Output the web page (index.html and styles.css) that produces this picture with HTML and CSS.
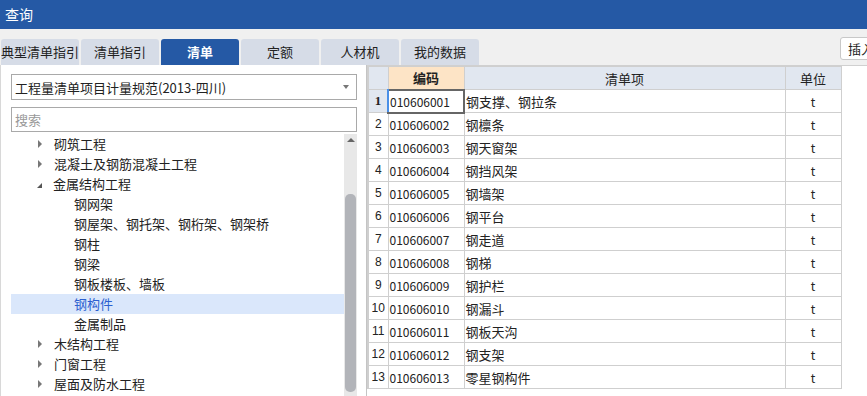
FILE: index.html
```html
<html lang="zh-CN">
  <head>
    <meta charset="UTF-8" />
    <title>查询</title>
    <link rel="stylesheet" href="styles.css">
  </head>
  <body>
    <!-- Title bar -->
    <header class="titlebar">查询</header>

    <!-- Tabs -->
    <nav class="tabs">
      <a class="tab">典型清单指引</a>
      <a class="tab">清单指引</a>
      <a class="tab active">清单</a>
      <a class="tab">定额</a>
      <a class="tab">人材机</a>
      <a class="tab">我的数据</a>
      <button class="insert-btn">插入</button>
    </nav>

    <main class="content">
      <!-- Left: spec select + tree -->
      <section class="left">
        <div class="select">
          <span>工程量清单项目计量规范(2013-四川)</span>
          <span class="caret"></span>
        </div>
        <div class="search">搜索</div>
        <div class="tree-wrap">
          <ul class="tree">
            <li class="node"><span class="arrow"></span>砌筑工程</li>
            <li class="node"><span class="arrow"></span>混凝土及钢筋混凝土工程</li>
            <li class="node"><span class="arrow open"></span>金属结构工程</li>
            <li class="leaf">钢网架</li>
            <li class="leaf">钢屋架、钢托架、钢桁架、钢架桥</li>
            <li class="leaf">钢柱</li>
            <li class="leaf">钢梁</li>
            <li class="leaf">钢板楼板、墙板</li>
            <li class="leaf selected">钢构件</li>
            <li class="leaf">金属制品</li>
            <li class="node"><span class="arrow"></span>木结构工程</li>
            <li class="node"><span class="arrow"></span>门窗工程</li>
            <li class="node"><span class="arrow"></span>屋面及防水工程</li>
          </ul>
          <div class="scrollbar">
            <span class="up"></span>
            <span class="thumb"></span>
          </div>
        </div>
      </section>

      <!-- Right: result grid -->
      <section class="right">
        <table class="grid">
          <colgroup>
            <col class="c-num" />
            <col class="c-code" />
            <col class="c-name" />
            <col class="c-unit" />
          </colgroup>
          <thead>
            <tr>
              <th></th>
              <th class="code-head">编码</th>
              <th>清单项</th>
              <th>单位</th>
            </tr>
          </thead>
          <tbody>
            <tr class="current"><td class="num">1</td><td class="focus">010606001</td><td>钢支撑、钢拉条</td><td class="unit">t</td></tr>
            <tr><td class="num">2</td><td>010606002</td><td>钢檩条</td><td class="unit">t</td></tr>
            <tr><td class="num">3</td><td>010606003</td><td>钢天窗架</td><td class="unit">t</td></tr>
            <tr><td class="num">4</td><td>010606004</td><td>钢挡风架</td><td class="unit">t</td></tr>
            <tr><td class="num">5</td><td>010606005</td><td>钢墙架</td><td class="unit">t</td></tr>
            <tr><td class="num">6</td><td>010606006</td><td>钢平台</td><td class="unit">t</td></tr>
            <tr><td class="num">7</td><td>010606007</td><td>钢走道</td><td class="unit">t</td></tr>
            <tr><td class="num">8</td><td>010606008</td><td>钢梯</td><td class="unit">t</td></tr>
            <tr><td class="num">9</td><td>010606009</td><td>钢护栏</td><td class="unit">t</td></tr>
            <tr><td class="num">10</td><td>010606010</td><td>钢漏斗</td><td class="unit">t</td></tr>
            <tr><td class="num">11</td><td>010606011</td><td>钢板天沟</td><td class="unit">t</td></tr>
            <tr><td class="num">12</td><td>010606012</td><td>钢支架</td><td class="unit">t</td></tr>
            <tr><td class="num">13</td><td>010606013</td><td>零星钢构件</td><td class="unit">t</td></tr>
          </tbody>
        </table>
      </section>
    </main>
  </body>
</html>
```
FILE: styles.css
```css
body {
  margin: 0;
  width: 867px;
  height: 396px;
  overflow: hidden;
  background-color: #f0f0f0;
  font-family: "Noto Sans CJK SC", "Noto Sans", sans-serif;
  font-size: 13px;
  color: #222;
}
.titlebar {
  height: 29px;
  line-height: 28px;
  padding-left: 5px;
  background-color: #2559a5; /* window blue */
  color: white;
  font-size: 14px;
}
.tabs {
  display: flex;
  align-items: flex-end;
  gap: 2px;
  height: 36px;
  padding-left: 1px;
  position: relative;
}
.tab {
  width: 78px;
  height: 26px;
  line-height: 25px;
  text-align: center;
  background-color: #d6dce7;
  border-radius: 3px 3px 0 0;
  color: #222;
  white-space: nowrap;
  overflow: hidden;
}
.tab.active {
  background-color: #2559a5;
  color: white;
  font-weight: bold;
}
.insert-btn {
  position: absolute;
  left: 840px;
  top: 8px;
  width: 40px;
  height: 23px;
  padding: 0 0 0 7px;
  text-align: left;
  background-color: white;
  border: 1px solid #c8c8c8;
  border-radius: 3px;
  font-family: inherit;
  font-size: 13px;
  color: #222;
}
.content {
  display: flex;
  height: 331px;
}

/* left panel */
.left {
  width: 346px;
  padding: 9px 9px 0 10px;
  background-color: white;
  border-left: 1px solid #d8d8d8;
  border-right: 1px solid #c4c4c4;
  display: flex;
  flex-direction: column;
}
.select {
  height: 24px;
  border: 1px solid #a9a9a9;
  display: flex;
  align-items: center;
  justify-content: space-between;
  padding: 0 7px 0 3px;
  flex-shrink: 0;
}
.caret {
  width: 0;
  height: 0;
  border-left: 3px solid transparent;
  border-right: 3px solid transparent;
  border-top: 4px solid #777;
}
.search {
  height: 23px;
  line-height: 23px;
  margin-top: 7px;
  padding-left: 3px;
  border: 1px solid #a9a9a9;
  color: #999;
  flex-shrink: 0;
}
.tree-wrap {
  display: flex;
  margin-top: 2px;
  flex-grow: 1;
  overflow: hidden;
}
.tree {
  list-style: none;
  margin: 0;
  padding: 0;
  flex-grow: 1;
}
.tree li {
  height: 20px;
  line-height: 20px;
  white-space: nowrap;
}
.node {
  padding-left: 27px;
  display: flex;
  align-items: center;
}
.leaf {
  padding-left: 63px;
}
.leaf.selected {
  background-color: #dae7fb;
  color: #2b5fd0;
}
.arrow {
  width: 0;
  height: 0;
  margin-right: 12px;
  border-top: 4px solid transparent;
  border-bottom: 4px solid transparent;
  border-left: 4px solid #777;
}
.arrow.open {
  border-top: 0;
  border-left: 5px solid transparent;
  border-bottom: 5px solid #555;
  margin-right: 11px;
  margin-left: -1px;
  margin-top: 3px;
}
.scrollbar {
  width: 13px;
  background-color: #e8e8e8;
  position: relative;
  flex-shrink: 0;
}
.scrollbar .up {
  position: absolute;
  left: 3px;
  top: 4px;
  width: 0;
  height: 0;
  border-left: 4px solid transparent;
  border-right: 4px solid transparent;
  border-bottom: 4px solid #666;
}
.scrollbar .thumb {
  position: absolute;
  left: 1px;
  top: 60px;
  width: 11px;
  height: 198px;
  background-color: #b2b4b9;
  border-radius: 5px;
}

/* right grid */
.right {
  flex-grow: 1;
  background-color: white;
  border-top: 1px solid #d0d0d0;
}
.grid {
  border-collapse: collapse;
  font-size: 12px;
  table-layout: fixed;
}
.c-num { width: 20px; }
.c-code { width: 76px; }
.c-name { width: 321px; }
.c-unit { width: 56px; }
.grid tr {
  height: 23px;
}
.grid th,
.grid td {
  padding: 0 1px;
  border: 1px solid #cfcfcf;
  white-space: nowrap;
  overflow: hidden;
}
.grid th {
  background-color: #e1e7f0;
  font-weight: normal;
  text-align: center;
  font-size: 13px;
}
.grid th.code-head {
  background-color: #fde4c6;
  font-weight: bold;
}
.grid td.num {
  text-align: center;
  font-family: "Liberation Sans", sans-serif;
  font-size: 12px;
  padding: 0;
  border-left: 2px solid #cfcfcf;
}
.grid th:first-child {
  border-left: 2px solid #cfcfcf;
}
.grid tr.current td.num {
  background-color: #e1e7f0;
  font-weight: bold;
  font-family: "Liberation Serif", serif;
  font-size: 13px;
}
.grid td.focus {
  border: 2px solid #666;
  border-left-color: #4a90e8;
}
.grid td.unit {
  text-align: center;
}
.grid td:nth-child(3) {
  font-size: 13px;
  padding-left: 1px;
}
```
